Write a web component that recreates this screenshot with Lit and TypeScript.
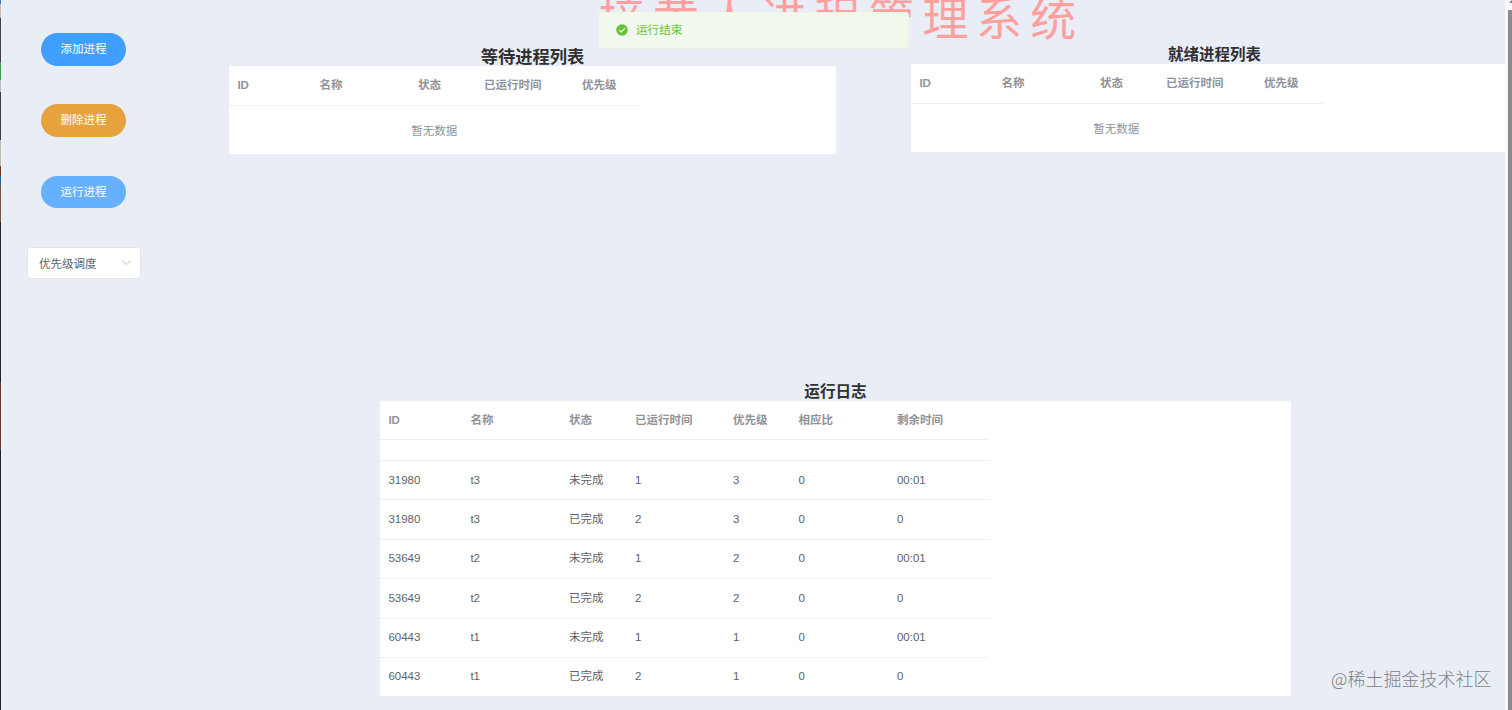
import { LitElement, html, css } from "lit";
import { customElement, property } from "lit/decorators.js";

type Row = string[];

@customElement("process-table")
class ProcessTable extends LitElement {
  @property({ attribute: false }) columns: string[] = [];
  @property({ attribute: false }) rows: Row[] = [];
  @property({ type: Boolean }) log = false;

  static styles = css`
    :host { display: block; background: #fff; color: #606266; font-size: 11.5px; }
    .grid { width: 411.5px; }
    .grid.log { width: 608.5px; }
    .row { display: grid; grid-template-columns: 82px 98.5px 66px 98px 67px; height: 39.4px; align-items: center; border-bottom: 1px solid #ebeef5; box-sizing: border-box; }
    .log .row { grid-template-columns: 82px 98.5px 66px 98px 65.5px 98.5px 100px; }
    .row.head { color: #909399; font-weight: 600; height: 39.5px; }
    .log .row.head { height: 39px; }
    .row.blank { height: 21px; }
    .cell { padding-left: 8.4px; white-space: nowrap; line-height: 19px; }
    .head .cell { padding-top: 1px; }
    .empty { height: 48.5px; line-height: 50px; text-align: center; color: #909399; text-indent: -1px; }
    .log .row:last-child { border-bottom: 0; height: 38px; }
  `;

  render() {
    return html`<div class="grid ${this.log ? "log" : ""}">
      <div class="row head">${this.columns.map((c) => html`<div class="cell">${c}</div>`)}</div>
      ${this.rows.length
        ? this.rows.map((r) => html`<div class="row ${r.length ? "" : "blank"}">${r.map((c) => html`<div class="cell">${c}</div>`)}</div>`)
        : html`<div class="empty">暂无数据</div>`}
    </div>`;
  }
}

@customElement("app-root")
class AppRoot extends LitElement {
  static styles = css`
    :host { display: block; font-family: "Liberation Sans", "Noto Sans CJK SC", sans-serif; color: #303133; }
    .page { position: relative; display: flex; width: 1512px; height: 710px; overflow: hidden; background: #e9edf5; }
    .edge { width: 2px; flex: none; box-sizing: border-box; border-right: 1px solid #f4f4f5;
      background: linear-gradient(#3775b0 0 4px, #c5b9b0 4px 18px, #3a4050 18px 62px, #3f9b51 62px 80px, #b8bcc0 80px 92px, #383b49 92px 140px, #b9bdb3 140px 166px, #6b3425 166px 176px, #275b8b 176px 185px, #74503d 185px 222px, #202431 222px 382px, #643b2d 382px 450px, #1b202b 450px); }
    .side { width: 163px; flex: none; padding-top: 33px; display: flex; flex-direction: column; align-items: center; box-sizing: border-box; }
    .btn { width: 85.5px; height: 32.5px; line-height: 33px; border-radius: 17px; text-align: center; color: #fff; font-size: 11.5px; margin-bottom: 38.9px; }
    .primary { background: #409eff; }
    .warning { background: #e6a23c; }
    .active { background: #66b1ff; }
    .select { width: 114px; height: 32px; box-sizing: border-box; border: 1px solid #e1e4ea; border-radius: 3px; background: #fff; display: flex; align-items: center; justify-content: space-between; padding: 0 8px 1px 11.5px; font-size: 11.5px; color: #606266; }
    .main { flex: 1; min-width: 0; }
    .title { height: 44px; margin-left: 434px; white-space: nowrap; color: #ffa09f; font-size: 46px; letter-spacing: 7.9px; line-height: 39px; }
    .lists { display: flex; height: 337px; padding-left: 64px; }
    .wait { width: 607px; flex: none; padding-top: 1.5px; }
    .ready { width: 607px; margin-left: 75px; flex: none; }
    h3 { margin: 0; font-size: 17.3px; line-height: 22px; height: 20.5px; text-align: center; font-weight: 700; }
    .ready h3 { height: 20px; font-size: 15.5px; line-height: 22px; }
    .log { width: 911px; margin-left: 215px; }
    .log h3 { font-size: 15.6px; height: 20px; line-height: 22px; }
    .log process-table { height: 295px; }
    .scroll { width: 7px; flex: none; box-sizing: border-box; border-left: 3px solid #f8f9fa; background: #8a8b8b; }
    .scroll svg { display: block; }
    .message { position: absolute; left: 598px; top: 12px; width: 311px; height: 37px; box-sizing: border-box; display: flex; align-items: center; gap: 8px; padding: 0 0 1px 17px; background: #f0f9eb; border: 1px solid #ebf7e4; border-radius: 3px; color: #67c23a; font-size: 11.6px; }
    .message span { margin-top: -2px; }
    .watermark { position: absolute; left: 1331px; top: 666px; font-size: 18px; line-height: 24px; font-weight: 300; color: #7e8289; white-space: nowrap; font-family: "Noto Sans CJK SC", sans-serif; }
  `;

  render() {
    const cols = ["ID", "名称", "状态", "已运行时间", "优先级"];
    const rows: Row[] = [[]];
    [["31980", "t3", "3"], ["53649", "t2", "2"], ["60443", "t1", "1"]].forEach(([id, name, priority]) => {
      rows.push([id, name, "未完成", "1", priority, "0", "00:01"]);
      rows.push([id, name, "已完成", "2", priority, "0", "0"]);
    });
    return html`<div class="page">
      <div class="edge"></div>
      <div class="side">
        <div class="btn primary">添加进程</div>
        <div class="btn warning">删除进程</div>
        <div class="btn active">运行进程</div>
        <div class="select">优先级调度
          <svg width="11" height="11" viewBox="0 0 11 11" fill="none" stroke="#c0c4cc"><path d="M1.2 3.4 5.5 7.7 9.8 3.4" /></svg>
        </div>
      </div>
      <div class="main">
        <div class="title">接黄人进程管理系统</div>
        <div class="lists">
          <div class="wait"><h3>等待进程列表</h3><process-table .columns=${cols}></process-table></div>
          <div class="ready"><h3>就绪进程列表</h3><process-table .columns=${cols}></process-table></div>
        </div>
        <div class="log"><h3>运行日志</h3>
          <process-table log .columns=${[...cols, "相应比", "剩余时间"]} .rows=${rows}></process-table>
        </div>
      </div>
      <div class="scroll"><svg width="4" height="10"><rect width="4" height="10" fill="#f8f9fa" /><path d="M1 3 4 0V3Z" fill="#777" /></svg></div>
      <div class="message">
        <svg width="12" height="12" viewBox="0 0 12 12"><circle cx="6" cy="6" r="5.8" fill="#67c23a" /><path d="M3.2 6.1 5.2 8 8.8 4.3" fill="none" stroke="#fff" stroke-width="1.1" /></svg>
        <span>运行结束</span>
      </div>
      <div class="watermark">@稀土掘金技术社区</div>
    </div>`;
  }
}
